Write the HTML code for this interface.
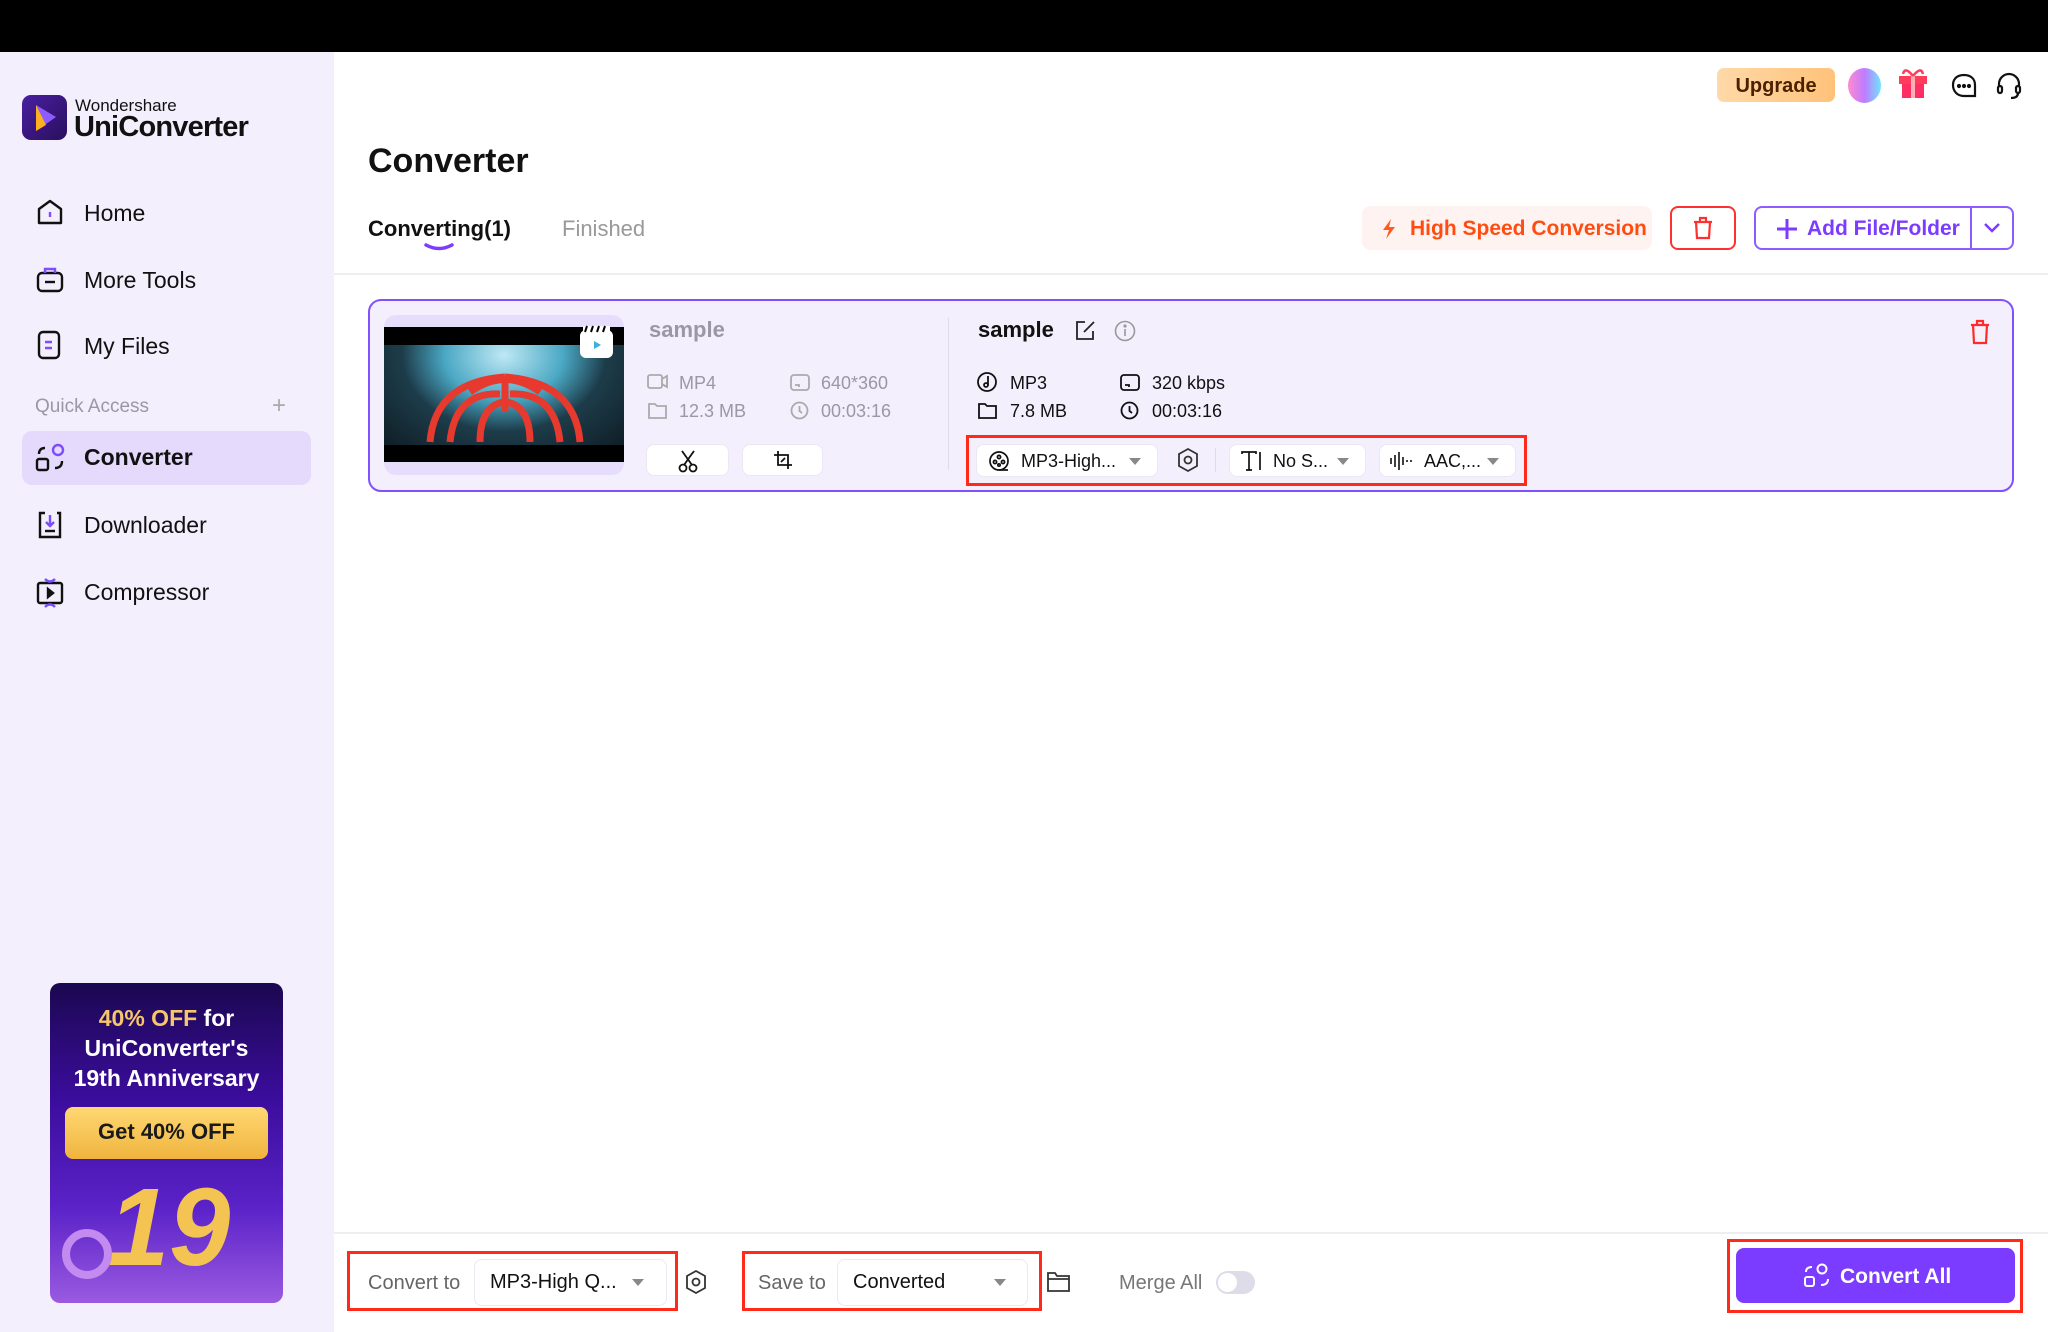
<!DOCTYPE html>
<html><head><meta charset="utf-8"><style>
*{box-sizing:border-box;margin:0;padding:0}
body{width:2048px;height:1332px;position:relative;background:#fff;font-family:"Liberation Sans",Arial,sans-serif;color:#111;overflow:hidden}
.a{position:absolute}
.t{position:absolute;white-space:nowrap;line-height:1}
svg{position:absolute;overflow:visible}
.nav{font-size:23px;color:#111}
.gray{color:#8a8a93}
.pill{position:absolute;background:#fff;border:1px solid #ebe8f2;border-radius:8px}
.red{position:absolute;border:3px solid #ff2a1a}
.tri{position:absolute;width:0;height:0;border-left:6px solid transparent;border-right:6px solid transparent;border-top:7px solid #888}
</style></head><body>
<div class="a" style="left:0;top:0;width:2048px;height:52px;background:#000"></div>
<!-- sidebar -->
<div class="a" style="left:0;top:52px;width:334px;height:1280px;background:#f3effc"></div>
<div class="a" style="left:22px;top:95px;width:45px;height:45px;border-radius:9px;background:linear-gradient(135deg,#4a1fa0,#2a0f5e)"></div>
<svg style="left:22px;top:95px" width="45" height="45"><path d="M14 10 L34 22 L14 36 Z" fill="#8c5cff"/><path d="M14 10 L14 36 L24 30 Z" fill="#ffb020"/></svg>
<div class="t" style="left:75px;top:97px;font-size:17px">Wondershare</div>
<div class="t" style="left:74px;top:113px;font-size:29px;font-weight:bold;letter-spacing:-0.8px">UniConverter</div>

<svg style="left:37px;top:199px" width="28" height="28" fill="none" stroke="#111" stroke-width="2.4"><path d="M2 10 L13 2 L24 10 V24 H2 Z" stroke-linejoin="round"/><path d="M13 13 v5" stroke="#7c4dff"/></svg>
<div class="t nav" style="left:84px;top:202px">Home</div>
<svg style="left:37px;top:266px" width="28" height="28" fill="none" stroke="#111" stroke-width="2.4"><rect x="1" y="7" width="24" height="18" rx="4"/><path d="M8 7 V3 H18 V7" stroke="#7c4dff"/><path d="M8 16 H18"/></svg>
<div class="t nav" style="left:84px;top:269px">More Tools</div>
<svg style="left:37px;top:331px" width="28" height="30" fill="none" stroke="#111" stroke-width="2.4"><rect x="2" y="1" width="20" height="26" rx="4"/><path d="M8 11 H15 M8 17 H15" stroke="#7c4dff"/></svg>
<div class="t nav" style="left:84px;top:335px">My Files</div>
<div class="t gray" style="left:35px;top:397px;font-size:19px;color:#9a98a6">Quick Access</div>
<div class="t" style="left:272px;top:394px;font-size:24px;color:#aaa;font-weight:300">+</div>
<div class="a" style="left:22px;top:431px;width:289px;height:54px;border-radius:10px;background:#e6dafc"></div>
<svg style="left:36px;top:443px" width="30" height="30" fill="none" stroke="#111" stroke-width="2.4"><rect x="1" y="16" width="11" height="11" rx="2"/><circle cx="22" cy="7" r="5" stroke="#7c4dff"/><path d="M3 11 Q3 5 9 5 M26 18 Q26 25 19 25"/></svg>
<div class="t nav" style="left:84px;top:446px;font-weight:bold">Converter</div>
<svg style="left:37px;top:510px" width="28" height="30" fill="none" stroke="#111" stroke-width="2.4"><path d="M8 3 H3 V27 H23 V3 H20"/><path d="M13 5 V16 M9 12 L13 16 L17 12" stroke="#7c4dff"/><path d="M8 21 H18"/></svg>
<div class="t nav" style="left:84px;top:514px">Downloader</div>
<svg style="left:37px;top:577px" width="28" height="32" fill="none" stroke="#111" stroke-width="2.4"><rect x="1" y="6" width="24" height="20" rx="2"/><path d="M8 2 Q13 7 18 2 M8 30 Q13 25 18 30" stroke="#7c4dff"/><path d="M11 12 L16 16 L11 20 Z" fill="#111"/></svg>
<div class="t nav" style="left:84px;top:581px">Compressor</div>

<!-- banner -->
<div class="a" style="left:50px;top:983px;width:233px;height:320px;border-radius:10px;background:linear-gradient(180deg,#1b0850 0%,#3a0c9a 35%,#5a22c8 70%,#9a5ae0 100%);overflow:hidden">
<div class="t" style="left:0;width:233px;text-align:center;top:24px;font-size:23px;font-weight:bold;color:#fff"><span style="color:#f6c66a">40% OFF</span> for</div>
<div class="t" style="left:0;width:233px;text-align:center;top:54px;font-size:23px;font-weight:bold;color:#fff">UniConverter's</div>
<div class="t" style="left:0;width:233px;text-align:center;top:84px;font-size:23px;font-weight:bold;color:#fff">19th Anniversary</div>
<div class="a" style="left:15px;top:124px;width:203px;height:52px;border-radius:8px;background:linear-gradient(180deg,#ffd873,#f0b43e)"></div>
<div class="t" style="left:15px;width:203px;text-align:center;top:138px;font-size:22px;font-weight:bold;color:#1a1a1a">Get 40% OFF</div>
<div class="t" style="left:58px;top:190px;font-size:110px;font-weight:bold;font-style:italic;color:#f3c452">19</div>
<div class="a" style="left:12px;top:246px;width:50px;height:50px;border-radius:50%;border:8px solid #c38af0"></div>
</div>

<!-- main header -->
<div class="t" style="left:368px;top:144px;font-size:34px;font-weight:bold">Converter</div>
<div class="t" style="left:368px;top:218px;font-size:22px;font-weight:bold">Converting(1)</div>
<svg style="left:424px;top:243px" width="30" height="8"><path d="M2 2 Q15 9 28 2" stroke="#7c3cff" stroke-width="3.5" fill="none" stroke-linecap="round"/></svg>
<div class="t" style="left:562px;top:218px;font-size:22px;color:#999">Finished</div>
<div class="a" style="left:334px;top:273px;width:1714px;height:2px;background:#eeedf2"></div>

<!-- top right -->
<div class="a" style="left:1717px;top:68px;width:118px;height:34px;border-radius:7px;background:linear-gradient(90deg,#ffd9a8,#ffc27a)"></div>
<div class="t" style="left:1717px;width:118px;text-align:center;top:76px;font-size:20px;font-weight:bold;color:#4a2200">Upgrade</div>
<div class="a" style="left:1848px;top:68px;width:33px;height:35px;border-radius:50%;background:linear-gradient(90deg,#ff8ad0,#c07bff,#6fe4ff)"></div>
<svg style="left:1897px;top:66px" width="34" height="34"><rect x="2" y="10" width="28" height="8" fill="#ff3d5a"/><rect x="5" y="18" width="22" height="14" fill="#ff2f63"/><rect x="14" y="10" width="4" height="22" fill="#ffb0b8"/><path d="M16 10 Q8 0 6 8 M16 10 Q24 0 26 8" stroke="#ff3d5a" stroke-width="2.5" fill="none"/></svg>
<svg style="left:1951px;top:73px" width="26" height="26" fill="none" stroke="#111" stroke-width="2.2"><path d="M13 2 C5 2 2 7 2 12 C2 18 6 23 13 23 H24 V12 C24 6 20 2 13 2 Z"/><circle cx="8" cy="13" r="1" fill="#111"/><circle cx="13" cy="13" r="1" fill="#111"/><circle cx="18" cy="13" r="1" fill="#111"/></svg>
<svg style="left:1996px;top:72px" width="26" height="28" fill="none" stroke="#111" stroke-width="2.2"><path d="M3 15 V12 A10 10 0 0 1 23 12 V15"/><rect x="2" y="14" width="4" height="7" rx="2"/><rect x="20" y="14" width="4" height="7" rx="2"/><path d="M22 21 Q22 26 15 26"/></svg>

<!-- action buttons -->
<div class="a" style="left:1362px;top:206px;width:290px;height:44px;border-radius:8px;background:#fff3f1"></div>
<svg style="left:1381px;top:219px" width="16" height="20"><path d="M10 0 L2 11 H8 L5 20 L14 8 H8 Z" fill="#ff5a1f"/></svg>
<div class="t" style="left:1410px;top:218px;font-size:21px;font-weight:bold;color:#ff4d12">High Speed Conversion</div>
<div class="a" style="left:1670px;top:206px;width:66px;height:44px;border-radius:8px;border:2px solid #ff3030;background:#fff"></div>
<svg style="left:1693px;top:217px" width="20" height="22" fill="none" stroke="#ff3030" stroke-width="2.2"><path d="M1 5 H19 M7 5 V1 H13 V5 M3 5 L4 21 H16 L17 5"/></svg>
<div class="a" style="left:1754px;top:206px;width:260px;height:44px;border-radius:8px;border:2px solid #8c5cff;background:#fff"></div>
<div class="a" style="left:1970px;top:207px;width:1.5px;height:42px;background:#8c5cff"></div>
<svg style="left:1777px;top:219px" width="20" height="20" stroke="#7c3cff" stroke-width="3"><path d="M10 0 V20 M0 10 H20"/></svg>
<div class="t" style="left:1807px;top:218px;font-size:21px;font-weight:bold;color:#7c3cff">Add File/Folder</div>
<svg style="left:1984px;top:223px" width="16" height="10" fill="none" stroke="#7c3cff" stroke-width="2.5"><path d="M1 1 L8 8 L15 1"/></svg>

<!-- card -->
<div class="a" style="left:368px;top:299px;width:1646px;height:193px;border-radius:13px;border:2.5px solid #8150ff;background:#f3effc"></div>
<div class="a" style="left:384px;top:315px;width:240px;height:160px;border-radius:12px;background:#e6dcfb"></div>
<div class="a" style="left:384px;top:327px;width:240px;height:135px;background:#000"></div>
<div class="a" style="left:384px;top:345px;width:240px;height:100px;background:radial-gradient(ellipse at 50% 10%,#bfe8f5 0%,#4aa8c4 35%,#1d3c4a 60%,#0f1e26 100%)"></div>
<svg style="left:410px;top:372px" width="190" height="74" fill="none" stroke="#e8392e" stroke-width="7"><path d="M95 10 L95 40 M60 20 Q95 -5 130 20 M40 70 Q45 20 90 22 M150 70 Q145 20 100 22 M70 70 Q70 35 93 30 M120 70 Q120 35 97 30 M20 70 Q25 10 95 5 M170 70 Q165 10 95 5"/></svg>
<div class="a" style="left:580px;top:330px;width:33px;height:28px;border-radius:6px;background:#fff"></div>
<svg style="left:580px;top:324px" width="33" height="34"><path d="M3 2 L30 2 L30 8 L3 8 Z" fill="#fff"/><path d="M7 2 L5 8 M13 2 L11 8 M19 2 L17 8 M25 2 L23 8" stroke="#000" stroke-width="2"/><path d="M14 17 L21 21 L14 25 Z" fill="#3ab0e0"/></svg>

<div class="t" style="left:649px;top:319px;font-size:22px;font-weight:bold;color:#9a98a6">sample</div>
<svg style="left:647px;top:374px" width="22" height="16" fill="none" stroke="#aaa" stroke-width="1.8"><rect x="1" y="1" width="14" height="13" rx="2"/><path d="M15 5 L20 2 V13 L15 10"/></svg>
<div class="t" style="left:679px;top:374px;font-size:18px;color:#9a98a6">MP4</div>
<svg style="left:648px;top:402px" width="20" height="17" fill="none" stroke="#aaa" stroke-width="1.8"><path d="M1 2 H7 L9 4 H18 V16 H1 Z"/></svg>
<div class="t" style="left:679px;top:402px;font-size:18px;color:#9a98a6">12.3 MB</div>
<svg style="left:790px;top:374px" width="20" height="17" fill="none" stroke="#aaa" stroke-width="1.8"><rect x="1" y="1" width="18" height="15" rx="3"/><path d="M5 11 H9 V13"/></svg>
<div class="t" style="left:821px;top:374px;font-size:18px;color:#9a98a6">640*360</div>
<svg style="left:790px;top:401px" width="19" height="19" fill="none" stroke="#aaa" stroke-width="1.8"><circle cx="9.5" cy="9.5" r="8"/><path d="M9.5 5 V10 L12 12"/></svg>
<div class="t" style="left:821px;top:402px;font-size:18px;color:#9a98a6">00:03:16</div>
<div class="pill" style="left:646px;top:444px;width:83px;height:32px"></div>
<svg style="left:677px;top:450px" width="22" height="22" fill="none" stroke="#111" stroke-width="1.8"><path d="M5 1 L15 15 M17 1 L7 15"/><circle cx="6" cy="18" r="3.5"/><circle cx="16" cy="18" r="3.5"/></svg>
<div class="pill" style="left:742px;top:444px;width:81px;height:32px"></div>
<svg style="left:773px;top:450px" width="20" height="20" fill="none" stroke="#111" stroke-width="1.8"><path d="M5 1 V15 H19 M1 5 H15 V19"/><path d="M8 12 L12 8"/></svg>

<div class="a" style="left:948px;top:318px;width:1px;height:152px;background:#dedbe6"></div>
<div class="t" style="left:978px;top:319px;font-size:22px;font-weight:bold">sample</div>
<svg style="left:1075px;top:320px" width="21" height="21" fill="none" stroke="#222" stroke-width="1.8"><path d="M10 2 H2 V19 H18 V11"/><path d="M9 12 L19 2"/></svg>
<svg style="left:1114px;top:320px" width="22" height="22" fill="none" stroke="#999" stroke-width="1.6"><circle cx="11" cy="11" r="9.5"/><path d="M11 9 V16"/><circle cx="11" cy="6" r="0.8" fill="#999"/></svg>
<svg style="left:977px;top:372px" width="20" height="20" fill="none" stroke="#111" stroke-width="1.8"><circle cx="10" cy="10" r="9"/><path d="M11 4 V13"/><circle cx="9" cy="13" r="2"/></svg>
<div class="t" style="left:1010px;top:374px;font-size:18px">MP3</div>
<svg style="left:978px;top:402px" width="20" height="17" fill="none" stroke="#111" stroke-width="1.8"><path d="M1 2 H7 L9 4 H18 V16 H1 Z"/></svg>
<div class="t" style="left:1010px;top:402px;font-size:18px">7.8 MB</div>
<svg style="left:1120px;top:374px" width="20" height="17" fill="none" stroke="#111" stroke-width="1.8"><rect x="1" y="1" width="18" height="15" rx="3"/><path d="M5 11 H9 V13"/></svg>
<div class="t" style="left:1152px;top:374px;font-size:18px">320 kbps</div>
<svg style="left:1120px;top:401px" width="19" height="19" fill="none" stroke="#111" stroke-width="1.8"><circle cx="9.5" cy="9.5" r="8"/><path d="M9.5 5 V10 L12 12"/></svg>
<div class="t" style="left:1152px;top:402px;font-size:18px">00:03:16</div>

<div class="red" style="left:966px;top:435px;width:561px;height:51px"></div>
<div class="pill" style="left:976px;top:444px;width:182px;height:33px"></div>
<svg style="left:988px;top:450px" width="22" height="22" fill="none" stroke="#111" stroke-width="1.7"><circle cx="11" cy="11" r="9"/><circle cx="11" cy="7" r="1.6"/><circle cx="7" cy="12" r="1.6"/><circle cx="15" cy="12" r="1.6"/><circle cx="11" cy="15" r="1.2"/><path d="M11 20 H20"/></svg>
<div class="t" style="left:1021px;top:452px;font-size:18px">MP3-High...</div>
<div class="tri" style="left:1129px;top:458px"></div>
<svg style="left:1177px;top:448px" width="22" height="24" fill="none" stroke="#333" stroke-width="1.8"><path d="M11 1 L20 6 V18 L11 23 L2 18 V6 Z"/><circle cx="11" cy="12" r="3.5"/></svg>
<div class="a" style="left:1215px;top:448px;width:1px;height:24px;background:#ddd"></div>
<div class="pill" style="left:1229px;top:444px;width:137px;height:33px"></div>
<svg style="left:1241px;top:451px" width="22" height="20" fill="none" stroke="#111" stroke-width="1.7"><path d="M1 3 V1 H15 V3 M8 1 V19 M5 19 H11 M19 1 V19"/></svg>
<div class="t" style="left:1273px;top:452px;font-size:18px">No S...</div>
<div class="tri" style="left:1337px;top:458px"></div>
<div class="pill" style="left:1379px;top:444px;width:137px;height:33px"></div>
<svg style="left:1389px;top:451px" width="24" height="20" stroke="#111" stroke-width="1.6"><path d="M2 7 V13 M6 4 V16 M10 1 V19 M14 6 V14 M18 9 V11 M22 9 V11"/></svg>
<div class="t" style="left:1424px;top:452px;font-size:18px">AAC,...</div>
<div class="tri" style="left:1487px;top:458px"></div>
<svg style="left:1970px;top:320px" width="20" height="24" fill="none" stroke="#ff2a2a" stroke-width="2.2"><path d="M1 5 H19 M7 5 V1 H13 V5 M3 5 L4 23 H16 L17 5"/></svg>

<!-- bottom bar -->
<div class="a" style="left:334px;top:1232px;width:1714px;height:2px;background:#eeedf2"></div>
<div class="red" style="left:347px;top:1251px;width:331px;height:60px"></div>
<div class="t" style="left:368px;top:1273px;font-size:20px;color:#666">Convert to</div>
<div class="pill" style="left:474px;top:1259px;width:193px;height:47px"></div>
<div class="t" style="left:490px;top:1272px;font-size:20px">MP3-High Q...</div>
<div class="tri" style="left:632px;top:1279px"></div>
<svg style="left:685px;top:1270px" width="22" height="24" fill="none" stroke="#333" stroke-width="1.8"><path d="M11 1 L20 6 V18 L11 23 L2 18 V6 Z"/><circle cx="11" cy="12" r="3.5"/></svg>
<div class="red" style="left:742px;top:1251px;width:300px;height:60px"></div>
<div class="t" style="left:758px;top:1273px;font-size:20px;color:#666">Save to</div>
<div class="pill" style="left:837px;top:1259px;width:191px;height:47px"></div>
<div class="t" style="left:853px;top:1272px;font-size:20px">Converted</div>
<div class="tri" style="left:994px;top:1279px"></div>
<svg style="left:1047px;top:1271px" width="24" height="21" fill="none" stroke="#333" stroke-width="1.8"><path d="M1 2 H8 L10 5 H22 V20 H1 Z M1 8 H22"/></svg>
<div class="t" style="left:1119px;top:1273px;font-size:20px;color:#777">Merge All</div>
<div class="a" style="left:1216px;top:1271px;width:39px;height:23px;border-radius:12px;background:#dedce8"></div>
<div class="a" style="left:1218px;top:1273px;width:19px;height:19px;border-radius:50%;background:#fff"></div>
<div class="red" style="left:1727px;top:1239px;width:296px;height:74px"></div>
<div class="a" style="left:1736px;top:1248px;width:279px;height:55px;border-radius:8px;background:#7b3cff"></div>
<svg style="left:1804px;top:1263px" width="26" height="26" fill="none" stroke="#fff" stroke-width="2"><rect x="1" y="14" width="9" height="9" rx="2"/><circle cx="18" cy="6" r="4.5"/><path d="M2 9 Q2 4 8 4 M24 16 Q24 22 17 22"/></svg>
<div class="t" style="left:1840px;top:1266px;font-size:21px;font-weight:bold;color:#fff">Convert All</div>
</body></html>
